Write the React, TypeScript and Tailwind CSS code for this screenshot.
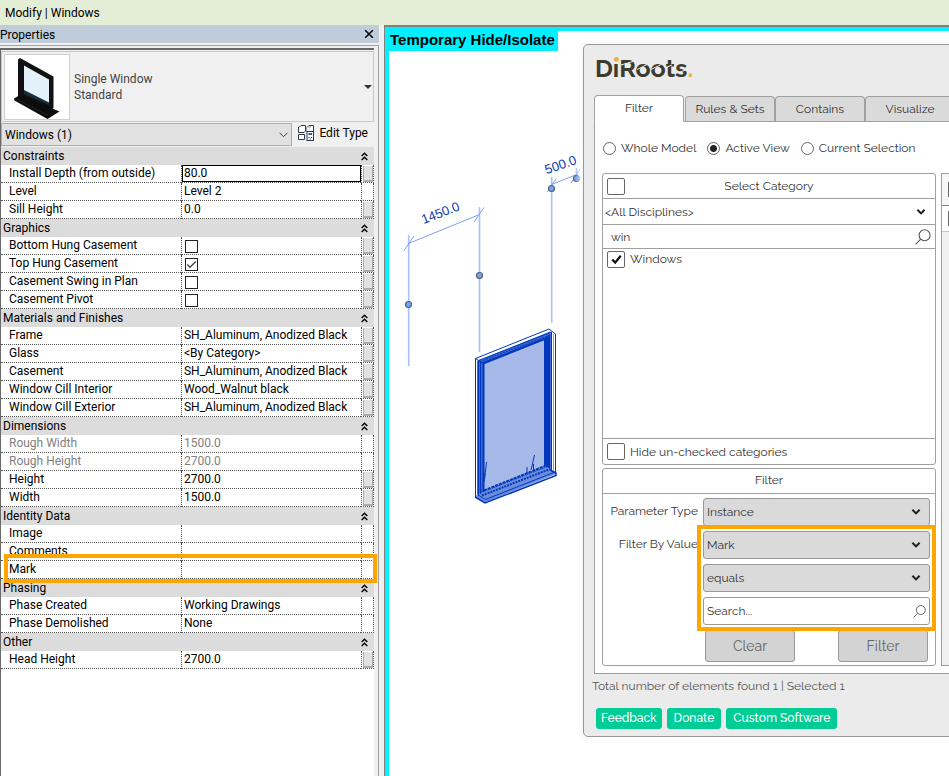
import React, { useState } from "react";

type TProperty = {
  label: string;
  value?: string;
  checked?: boolean;
  button?: boolean;
  disabled?: boolean;
  editing?: boolean;
  highlighted?: boolean;
};

type TGroup = { title: string; rows: TProperty[] };

const groups: TGroup[] = [
  {
    title: "Constraints",
    rows: [
      { label: "Install Depth (from outside)", value: "80.0", button: true, editing: true },
      { label: "Level", value: "Level 2" },
      { label: "Sill Height", value: "0.0", button: true },
    ],
  },
  {
    title: "Graphics",
    rows: [
      { label: "Bottom Hung Casement", checked: false, button: true },
      { label: "Top Hung Casement", checked: true, button: true },
      { label: "Casement Swing in Plan", checked: false, button: true },
      { label: "Casement Pivot", checked: false, button: true },
    ],
  },
  {
    title: "Materials and Finishes",
    rows: [
      { label: "Frame", value: "SH_Aluminum, Anodized Black", button: true },
      { label: "Glass", value: "<By Category>", button: true },
      { label: "Casement", value: "SH_Aluminum, Anodized Black", button: true },
      { label: "Window Cill Interior", value: "Wood_Walnut black", button: true },
      { label: "Window Cill Exterior", value: "SH_Aluminum, Anodized Black", button: true },
    ],
  },
  {
    title: "Dimensions",
    rows: [
      { label: "Rough Width", value: "1500.0", disabled: true },
      { label: "Rough Height", value: "2700.0", disabled: true },
      { label: "Height", value: "2700.0", button: true },
      { label: "Width", value: "1500.0", button: true },
    ],
  },
  {
    title: "Identity Data",
    rows: [
      { label: "Image", value: "" },
      { label: "Comments", value: "" },
      { label: "Mark", value: "", highlighted: true },
    ],
  },
  {
    title: "Phasing",
    rows: [
      { label: "Phase Created", value: "Working Drawings" },
      { label: "Phase Demolished", value: "None" },
    ],
  },
  {
    title: "Other",
    rows: [{ label: "Head Height", value: "2700.0", button: true }],
  },
];

const CollapseIcon = () => (
  <svg className="h-[9px] w-[7px]" viewBox="0 0 7 9" fill="none" stroke="#000" strokeWidth="1.4">
    <path d="M0.7 4 3.5 1.2 6.3 4M0.7 8 3.5 5.2 6.3 8" />
  </svg>
);

const ChevronIcon = ({ className }: { className: string }) => (
  <svg
    className={`pointer-events-none absolute h-[6px] w-[10px] ${className}`}
    viewBox="0 0 10 6"
    fill="none"
    stroke="#1f1f1f"
    strokeWidth="2"
  >
    <path d="M1.4 0.8 5 4.4 8.6 0.8" />
  </svg>
);

const SearchIcon = ({ className }: { className: string }) => (
  <svg className={className} viewBox="0 0 16 16" fill="none" stroke="#555" strokeWidth="1.1">
    <circle cx="9.6" cy="6.2" r="5.5" />
    <path d="M5.7 10.2 0.6 15.4" />
  </svg>
);

const WindowThumbnail = () => (
  <svg className="h-[64px] w-[64px]" viewBox="5 54 64 64">
    <path d="M18 58.5 20 57 53.5 75.5V107L48 112 18 95Z" fill="#111" />
    <path d="M24 64.5 49 78.5V103L24 91Z" fill="#e3f1fa" />
    <path d="M24 89 49 101.5V104L24 93Z" fill="#17303c" />
    <path d="M14 97.5 20 94 59.5 110.5 47.5 118 14.5 99.5Z" fill="#0c0c0c" />
    <path d="M16 97.8 48 114.5" stroke="#2c2c2c" strokeWidth="0.7" />
  </svg>
);

const EditTypeIcon = () => (
  <svg className="h-[16px] w-[16px]" viewBox="0 0 16 16" fill="#fff" stroke="#2f3a47" strokeWidth="1">
    <path d="M1.5 2 3 0.5h4.5V6L6 7.5H0.5V2Z" />
    <path d="M9.5 2 11 0.5h4.5V6" />
    <path d="M8.5 7V2h4.5" fill="none" stroke="#9aa3ad" />
    <path d="M0.5 9.5H6.5V14.5H0.5Z" />
    <rect x="9" y="6.5" width="6.5" height="9" />
    <path d="M10.5 9h3.5" stroke="#1d63b8" strokeWidth="2" />
    <path d="M10.5 12.5h1M13 12.5h1M11.7 14h1" />
  </svg>
);

const PropertyRow = ({ row, id }: { row: TProperty; id: string }) => (
  <tr className={`relative h-[18px] ${row.disabled ? "text-[#808080]" : "text-black"}`}>
    <td className="border-b border-dotted border-[#555] p-0 pl-2 align-top leading-[16px] whitespace-nowrap">
      <label htmlFor={id}>{row.label}</label>
      {row.highlighted && (
        <div className="pointer-events-none absolute -top-[7px] -right-[3px] -bottom-1 left-[3px] z-10 border-4 border-[#ffa500]" />
      )}
    </td>
    <td className="border-b border-l border-dotted border-[#555] p-0">
      {row.checked === undefined ? (
        <input
          id={id}
          type="text"
          defaultValue={row.value}
          disabled={row.disabled}
          className={`block w-full bg-transparent leading-[16px] outline-none ${
            row.editing ? "h-[17px] border border-black px-px pb-px" : "h-[17px] px-[2px] pb-px"
          }`}
        />
      ) : (
        <span className="flex h-[17px] items-end pb-px pl-[3px]">
          <span className="relative flex">
            <input
              id={id}
              type="checkbox"
              defaultChecked={row.checked}
              className="peer size-[13px] appearance-none border border-[#222] bg-white"
            />
            <svg
              className="pointer-events-none absolute inset-0 hidden size-[13px] peer-checked:block"
              viewBox="0 0 13 13"
              fill="none"
              stroke="#444"
              strokeWidth="1.3"
            >
              <path d="M2.2 6.5 5 9.3 10.8 3.5" />
            </svg>
          </span>
        </span>
      )}
    </td>
    <td className="border-r border-b border-l border-dotted border-[#555] p-0">
      {row.button && (
        <button
          aria-label={`Associate ${row.label}`}
          className="mt-px ml-px block h-[16px] w-[10px] border-r border-b-2 border-l border-[#adadad] bg-[#e1e1e1]"
        />
      )}
    </td>
  </tr>
);

const PropertiesPanel = () => (
  <aside className="flex w-96 shrink-0 flex-col bg-[#f0f0f0] text-xs">
    <div className="mr-[5px] flex h-[18px] items-center justify-between bg-[#bfcddb] pr-[5px]">
      <h2 className="pt-px leading-4">Properties</h2>
      <button aria-label="Close">
        <svg className="size-[10px]" viewBox="0 0 10 10" stroke="#000" strokeWidth="1.5">
          <path d="M1.2 1.2 8.8 8.8M8.8 1.2 1.2 8.8" />
        </svg>
      </button>
    </div>
    <div className="mt-[2px] mr-[5px] flex flex-1 flex-col border-t border-r border-[#a0a0a0] pt-[2px] pr-1">
      <div className="flex-1 border-t-2 border-l border-[#696969] bg-white">
        <div className="bg-[#f0f0f0] pt-px">
          {/* Type selector */}
          <div className="flex h-[71px] items-center border border-[#c8c8c8] pr-px pl-[2px]">
            <div className="border border-[#cfcfcf] bg-white">
              <WindowThumbnail />
            </div>
            <div className="ml-1 flex-1 leading-4 text-[#444]">
              <p>Single Window</p>
              <p>Standard</p>
            </div>
            <button aria-label="Change type">
              <svg className="h-[4px] w-[8px]" viewBox="0 0 8 4" fill="#333">
                <path d="M0 0h8L4 4Z" />
              </svg>
            </button>
          </div>
          <div className="flex items-start pb-px">
            <div className="relative mt-px flex-1">
              <select
                aria-label="Category filter"
                className="h-[23px] w-full appearance-none border border-[#adadad] bg-[#e1e1e1] pl-[3px]"
              >
                <option>Windows (1)</option>
              </select>
              <svg
                className="pointer-events-none absolute top-[9px] right-[4px] h-[6px] w-[9px]"
                viewBox="0 0 9 6"
                fill="none"
                stroke="#444"
              >
                <path d="M0.5 0.7 4.5 4.7 8.5 0.7" />
              </svg>
            </div>
            <button className="flex items-center gap-[5px] pt-[2px] pr-[6px] pl-[6px] leading-[18px]">
              <EditTypeIcon />
              Edit Type
            </button>
          </div>
        </div>
        <table className="w-full table-fixed border-separate border-spacing-0">
          <colgroup>
            <col />
            <col className="w-[180px]" />
            <col className="w-[13px]" />
          </colgroup>
          {groups.map((group) => (
            <tbody key={group.title}>
              <tr className="h-[18px] bg-[#dcdcdc]">
                <th colSpan={3} className="p-0 pr-[6px] pl-[2px] font-normal">
                  <div className="flex h-[18px] items-center justify-between">
                    {group.title}
                    <button aria-label={`Collapse ${group.title}`}>
                      <CollapseIcon />
                    </button>
                  </div>
                </th>
              </tr>
              {group.rows.map((row) => (
                <PropertyRow key={row.label} row={row} id={row.label.replace(/\W+/g, "-")} />
              ))}
            </tbody>
          ))}
        </table>
      </div>
    </div>
  </aside>
);

const handles = [
  [408.5, 304.5],
  [479.5, 275.5],
  [551.5, 188.5],
  [576.5, 178.5],
];

const ModelDrawing = () => (
  <svg className="absolute top-0 left-0 h-[490px] w-[194px]" viewBox="389 31 194 490" fill="none">
    <g stroke="#a9c0fa" strokeWidth="1.6">
      <path d="M408.7 235V366M479.5 207V352M551.7 177V323M576.5 168V182" />
    </g>
    <g stroke="#7f9ff5" strokeWidth="1">
      <path d="M408.5 243.5 479.5 214.5M551.7 184.5 576.7 174.5" />
      <path d="M404 250.5 414 236M474 222 484 207.5M547 192 556 179M571 183 581 168" />
    </g>
    {handles.map(([x, y]) => (
      <circle key={x} cx={x} cy={y} r="3" fill="#6fa5f2" stroke="#555f70" strokeWidth="1.1" />
    ))}
    <g fill="#0b3bab" fontSize="13" fontFamily="'Liberation Sans', sans-serif" textAnchor="middle">
      <text transform="translate(442 217) rotate(-21)">1450.0</text>
      <text transform="translate(562 169) rotate(-19)">500.0</text>
    </g>
    {/* Selected window */}
    <path d="M475.5 359 549 329.5 555.5 334V472L556 475 485 503 475 496Z" fill="#fff" />
    <path d="M477 361 550 331.5 551 334V471L485 501 477 496Z" fill="#3f69d0" />
    <path d="M484 364.5 544 340V466L484 491Z" fill="#a6b9e8" />
    <path d="M544 339 550 335V469L544 466Z" fill="#0038bd" />
    <path d="M484 491 544 466 549 468 556 474 485 502.5 475 496.5 478 494Z" fill="#6c8cdc" />
    <g stroke="#0038bd" strokeWidth="1">
      <path d="M475.5 497V358.5L549 329 555.5 334V472" />
      <path d="M478.5 496V360.5L551.5 332V470" />
      <path d="M480.5 361.5 550 335" strokeDasharray="2 1" />
      <path d="M475.5 358.5 483.5 363.5" />
      <path d="M483.5 492V363L549.5 337" strokeWidth="2" />
      <path d="M480.5 494V362" />
      <path d="M553.5 334V471" strokeOpacity="0.5" />
      <path d="M484 490.5 545 466" strokeWidth="2" strokeDasharray="3 1" />
      <path d="M482 495.5 550 469" strokeWidth="2" strokeDasharray="2 1" />
      <path d="M481 492.5 549 466" strokeDasharray="1 1" />
      <path d="M475 497 485 503 556 475.5V473L550 470" strokeWidth="1.5" />
      <path d="M478 495 485.5 499.5 555 472" />
      <path d="M484.5 479 486.5 462M485 473 484 482M531 470 534.5 455M527 473V467M533.5 470V464" />
    </g>
  </svg>
);

const Logo = () => (
  <div className="relative w-max text-[25px] leading-[30px] font-bold text-[#3d3b30]">
    DiRoots<span className="text-[#f0ad3c]">.</span>
    <svg className="absolute top-0 left-0 h-[30px] w-full" viewBox="0 0 98 30" preserveAspectRatio="xMinYMin">
      <rect x="18" y="2" width="7" height="8" fill="#ebebeb" />
      <circle cx="21.4" cy="6.4" r="2.4" fill="#f0ad3c" />
      <path
        d="M26 12 38 8.5M42 16.5 52 11.5M56 16.5 67 11M70 15 77 12M80 20.5 91 17"
        stroke="#ebebeb"
        strokeWidth="1"
      />
    </svg>
  </div>
);

const CheckBox = ({ label, checked = false }: { label: string; checked?: boolean }) => (
  <span className="relative flex shrink-0">
    <input
      type="checkbox"
      id={label}
      aria-label={label}
      defaultChecked={checked}
      className="peer h-[17px] w-[18px] appearance-none rounded-[2px] border border-[#666] bg-white"
    />
    <svg
      className="pointer-events-none absolute top-[3px] left-1 hidden h-[11px] w-[11px] peer-checked:block"
      viewBox="0 0 11 11"
      fill="none"
      stroke="#111"
      strokeWidth="2.3"
    >
      <path d="M1.2 5.5 4.2 8.6 9.7 1.8" />
    </svg>
  </span>
);

const DropDown = ({ id, label, options }: { id: string; label: string; options: string[] }) => (
  <div className="relative">
    <select
      id={id}
      aria-label={label}
      className="block h-7 w-full appearance-none rounded-[3px] border border-[#999] bg-[#dadada] pb-px pl-[3px]"
    >
      {options.map((option) => (
        <option key={option}>{option}</option>
      ))}
    </select>
    <ChevronIcon className="top-[11px] right-[9px]" />
  </div>
);

const tabs = ["Filter", "Rules & Sets", "Contains", "Visualize"];
const scopes = ["Whole Model", "Active View", "Current Selection"];

const FilterDialog = () => {
  const [activeTab, setActiveTab] = useState("Filter");
  const [scope, setScope] = useState("Active View");
  const [keyword, setKeyword] = useState("win");

  return (
    <section className="absolute top-[13px] left-[194px] w-[640px] rounded-[5px] border border-[#979797] bg-[#ebebeb] px-[10px] pb-[7px] font-[Raleway,'Open_Sans',sans-serif] text-xs text-[#333] shadow-[0_0_4px_4px_#fafafa]">
      <header className="h-[50px] pt-2 pl-px">
        <Logo />
      </header>

      {/* Tabs */}
      <div className="flex items-end">
        {tabs.map((tab) => (
          <button
            key={tab}
            onClick={() => setActiveTab(tab)}
            className={`relative w-[90px] rounded-t-[4px] border border-[#a0a0a0] ${
              activeTab === tab
                ? "z-10 mr-px -mb-px h-[27px] border-b-white bg-white pb-px"
                : "h-[25px] border-b-0 bg-[#dadada]"
            }`}
          >
            {tab}
          </button>
        ))}
      </div>

      <div className="border border-[#a0a0a0] bg-white px-[7px] pt-[17px] pb-[7px]">
        <div className="flex gap-[11px] pl-px leading-[18px]">
          {scopes.map((item) => (
            <label key={item} className="flex items-center gap-[5px]">
              <input
                type="radio"
                name="scope"
                checked={scope === item}
                onChange={() => setScope(item)}
                className="size-[13px] appearance-none rounded-full border border-[#666] bg-white checked:bg-[radial-gradient(circle,#222_0_3px,transparent_4px)]"
              />
              {item}
            </label>
          ))}
        </div>

        <div className="mt-4 flex gap-[5px]">
          <div className="flex w-[334px] shrink-0 flex-col gap-[3px]">
            {/* Category picker */}
            <div className="divide-y divide-[#a0a0a0] rounded-[3px] border border-[#a0a0a0]">
              <div className="relative flex h-[25px] items-center pl-1">
                <CheckBox label="Select all categories" />
                <h3 className="pointer-events-none absolute inset-x-0 text-center">Select Category</h3>
              </div>
              <div className="relative h-[26px]">
                <select aria-label="Discipline" className="h-full w-full appearance-none pl-[2px]">
                  <option>&lt;All Disciplines&gt;</option>
                </select>
                <ChevronIcon className="top-[10px] right-[9px]" />
              </div>
              <div className="flex h-6 items-center pr-1">
                <input
                  type="text"
                  aria-label="Search category"
                  value={keyword}
                  onChange={(e) => setKeyword(e.target.value)}
                  className="min-w-0 flex-1 pl-2 outline-none"
                />
                <SearchIcon className="size-4" />
              </div>
              <div className="h-[190px] pt-px pl-1">
                <div className="flex items-center gap-[5px] leading-[18px]">
                  <CheckBox label="Windows" checked />
                  <label htmlFor="Windows">Windows</label>
                </div>
              </div>
              <div className="flex h-[25px] items-center gap-[5px] pl-1">
                <CheckBox label="Hide un-checked categories" />
                <label htmlFor="Hide un-checked categories">Hide un-checked categories</label>
              </div>
            </div>

            {/* Parameter filter */}
            <div className="rounded-[3px] border border-[#a0a0a0] pb-[3px]">
              <h3 className="h-[25px] border-b border-[#a0a0a0] text-center leading-[23px]">Filter</h3>
              <div className="grid grid-cols-[auto_227px] justify-end gap-x-[5px] gap-y-[5px] pt-1 pr-[5px]">
                <label htmlFor="parameter-type" className="text-right leading-[27px]">
                  Parameter Type
                </label>
                <DropDown id="parameter-type" label="Parameter Type" options={["Instance", "Type"]} />
                <label htmlFor="filter-value" className="text-right leading-[27px]">
                  Filter By Value
                </label>
                <div className="relative flex flex-col gap-[5px]">
                  <DropDown id="filter-value" label="Filter By Value" options={["Mark", "Comments"]} />
                  <DropDown id="operator" label="Operator" options={["equals", "contains"]} />
                  <div className="flex h-7 items-center rounded-[3px] border border-[#999] bg-white pr-[3px] pl-[3px]">
                    <input
                      type="text"
                      aria-label="Value"
                      placeholder="Search..."
                      className="min-w-0 flex-1 outline-none placeholder:text-[#333]"
                    />
                    <SearchIcon className="size-[13px]" />
                  </div>
                  <div className="pointer-events-none absolute -inset-[6px] border-4 border-[#ffa500]" />
                </div>
              </div>
              <div className="mt-[5px] flex justify-between pr-[7px] pl-[102px] text-sm text-[#666]">
                <button className="h-8 w-[90px] rounded-[3px] border border-[#999] bg-[#d3d3d3]">Clear</button>
                <button className="h-8 w-[90px] rounded-[3px] border border-[#999] bg-[#d3d3d3]">Filter</button>
              </div>
            </div>
          </div>

          {/* Element list */}
          <div className="flex-1 border border-[#a0a0a0] bg-[#f0f0f0]">
            <div className="flex h-8 items-center border-b border-[#808080] bg-[#f7f7f7] pl-[6px]">
              <CheckBox label="Select all elements" />
            </div>
            <div className="flex h-[26px] items-center border-b border-[#c8c8c8] bg-white pl-[6px]">
              <CheckBox label="Element" />
            </div>
          </div>
        </div>
      </div>

      <p className="-ml-[2px] leading-6 text-[#555]">Total number of elements found 1 | Selected 1</p>
      <footer className="mt-[10px] flex gap-[5px] pl-[2px] font-medium text-white">
        <a href="#feedback" className="rounded-[3px] bg-[#00cc96] px-[5px] leading-[21px]">
          Feedback
        </a>
        <a href="#donate" className="rounded-[3px] bg-[#00cc96] px-[7px] leading-[21px]">
          Donate
        </a>
        <a href="#software" className="rounded-[3px] bg-[#00cc96] px-[7px] leading-[21px]">
          Custom Software
        </a>
      </footer>
    </section>
  );
};

const App: React.FC = () => {
  return (
    <div className="flex min-h-screen flex-col bg-white font-[Roboto,'Open_Sans',sans-serif] text-black">
      <header className="h-[25px] bg-[#e4eed6] pt-px pl-[5px] text-xs leading-6">Modify | Windows</header>
      <div className="flex flex-1">
        <PropertiesPanel />
        <main className="flex min-w-0 flex-1 border-t-2 border-l border-[#808080]">
          <div className="relative flex-1 overflow-hidden border-t-4 border-l-4 border-[#00f0ff]">
            <ModelDrawing />
            <h1 className="absolute top-0 left-0 bg-[#00f0ff] pr-[3px] pb-[3px] pl-px font-['Liberation_Sans',sans-serif] text-[15px] leading-[17px] font-bold">
              Temporary Hide/Isolate
            </h1>
            <FilterDialog />
          </div>
        </main>
      </div>
    </div>
  );
};

export default App;
